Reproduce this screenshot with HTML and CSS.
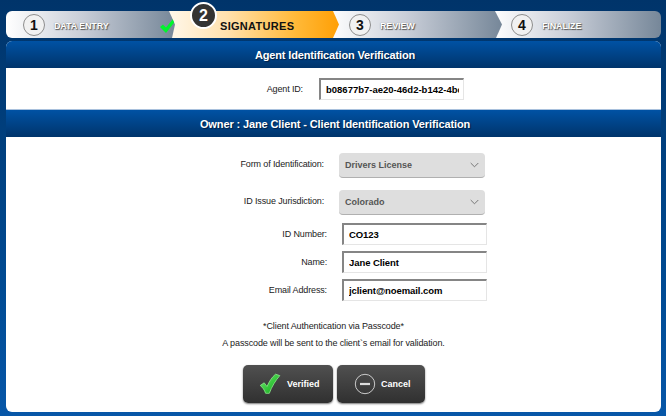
FILE: index.html
```
<!DOCTYPE html>
<html lang="en">
<head>
<meta charset="utf-8">
<title>Client Identification Verification</title>
<link rel="stylesheet" href="styles.css">
</head>
<body>
<nav class="steps">
  <div class="step step-1"><span class="num">1</span><span class="step-name">DATA ENTRY</span>
    <svg class="done" viewBox="0 0 15 14"><path d="M0 8 3 5.500 6 8.500 13 0 15 2.500 6 14Z" fill="#00f52c"/></svg>
  </div>
  <div class="step step-2 active"><span class="num">2</span><span class="step-name">SIGNATURES</span></div>
  <div class="step step-3"><span class="num">3</span><span class="step-name">REVIEW</span></div>
  <div class="step step-4"><span class="num">4</span><span class="step-name">FINALIZE</span></div>
</nav>
<main class="panel">
  <h2 class="bar"><span>Agent Identification Verification</span></h2>
  <div class="row row-agent"><span class="label">Agent ID:</span><div class="field"><span class="clip">b08677b7-ae20-46d2-b142-4bd</span></div></div>
  <h2 class="bar bar-owner"><span>Owner : Jane Client - Client Identification Verification</span></h2>
  <div class="form">
    <div class="row row-select"><span class="label">Form of Identification:</span><div class="select"><span>Drivers License</span><svg class="chev" viewBox="0 0 9 6"><path d="M.7 1 4.500 4.800 8.300 1"/></svg></div></div>
    <div class="row row-select"><span class="label">ID Issue Jurisdiction:</span><div class="select"><span>Colorado</span><svg class="chev" viewBox="0 0 9 6"><path d="M.7 1 4.500 4.800 8.300 1"/></svg></div></div>
    <div class="row row-text"><span class="label">ID Number:</span><div class="field"><span class="clip">CO123</span></div></div>
    <div class="row row-text"><span class="label">Name:</span><div class="field"><span class="clip">Jane Client</span></div></div>
    <div class="row row-text"><span class="label">Email Address:</span><div class="field"><span class="clip">jclient@noemail.com</span></div></div>
  </div>
  <p class="note note-first">*Client Authentication via Passcode*</p>
  <p class="note">A passcode will be sent to the client`s email for validation.</p>
  <div class="actions">
    <div class="btn btn-ok">
      <svg class="icon" viewBox="0 0 22 22"><defs><linearGradient id="g" x1="0" y1="0" x2="1" y2="1"><stop offset="0" stop-color="#72e672"/><stop offset=".55" stop-color="#35c63b"/><stop offset="1" stop-color="#149c20"/></linearGradient></defs><path d="M1.200 12.500 5.200 9.800 8 13.500C10.200 8.500 12.800 4.300 16.500 1.200L20.800 2.600C16.500 7.500 12.800 13.500 10.300 20.300H6.600C5.500 17 3.800 14.500 1.200 12.500Z" fill="url(#g)" stroke="#8eea8b" stroke-width=".8" stroke-linejoin="round"/></svg>
      <span>Verified</span>
    </div>
    <div class="btn btn-cancel">
      <svg class="icon" viewBox="0 0 22 22"><circle cx="11" cy="11" r="9.700" fill="none" stroke="#c9c9c9" stroke-width="1"/><path d="M6 11h10" stroke="#ddd" stroke-width="2.200"/></svg>
      <span>Cancel</span>
    </div>
  </div>
</main>
</body>
</html>
```
FILE: styles.css
```
* { box-sizing: border-box; }
html { height: 100%; }
body {
  margin: 0;
  height: 416px;
  padding: 11px 5px 0 6px;
  overflow: hidden;
  font-family: "Liberation Sans", Arial, sans-serif;
  background: linear-gradient(#00346a 0, #003a74 18%, #004b94 70%, #0757a8 100%);
}
.steps { display: flex; height: 27px; width: 655px; }
.step {
  position: relative;
  display: flex;
  flex: none;
  align-items: center;
  height: 27px;
  background: linear-gradient(90deg, #fff 0, #c9ced8 45%, #768799 100%);
}
.step-1 { width: 169px; z-index: 4; padding-left: 17px; border-radius: 6px 0 0 6px; clip-path: polygon(0 0, 163px 0, 100% 50%, 166px 100%, 0 100%); }
.step-2 { width: 172px; margin-left: -8px; z-index: 3; padding-left: 23px; }
.step-3 { width: 173px; margin-left: -10px; z-index: 2; padding-left: 20px; clip-path: polygon(0 0, 166px 0, 100% 50%, 167px 100%, 0 100%); }
.step-4 { width: 169px; margin-left: -10px; z-index: 1; padding-left: 19px; border-radius: 0 6px 6px 0; }
.step.active { background: none; }
.step.active::before {
  content: "";
  position: absolute;
  z-index: -1;
  inset: 0;
  background: linear-gradient(90deg, #fff8ed 0, #ffe1ad 35%, #ffb938 75%, #ff9f05 100%);
  clip-path: polygon(0 0, 166px 0, 100% 50%, 166px 100%, 0 100%);
}
.num {
  flex: none;
  width: 22px;
  height: 22px;
  border: 1px solid #8d8d8d;
  border-radius: 50%;
  background: #f1f1f1;
  color: #111;
  font: bold 14px/20px "Liberation Sans", Arial, sans-serif;
  text-align: center;
}
.active .num {
  width: 27px;
  height: 27px;
  margin-top: -18px;
  border: 2px solid #fff;
  background: #333;
  color: #fff;
  font-size: 16px;
  line-height: 23px;
}
.step-name {
  margin: 2px 0 0 9px;
  color: #fff;
  font-weight: bold;
  font-size: 9px;
  letter-spacing: -.15px;
  text-shadow: 1px 1px 1px #555, 0 0 1px #777;
}
.active .step-name { margin: 3px 0 0 3px; color: #111; font-size: 11px; letter-spacing: .3px; text-shadow: none; }
.done { position: absolute; left: 154px; top: 8px; width: 15px; height: 14px; }
.panel {
  width: 655px;
  height: 371px;
  margin-top: 3px;
  overflow: hidden;
  background: #fff;
  border-radius: 6px;
}
.bar {
  display: flex;
  justify-content: center;
  align-items: center;
  height: 27px;
  margin: 0;
  padding-left: 3px;
  color: #fff;
  font-size: 11px;
  line-height: 13px;
  letter-spacing: -.15px;
  background: linear-gradient(#0052a4, #00346b);
  text-shadow: 1px 1px 1px #001f44;
}
.bar-owner { height: 28px; border-top: 1px solid #a9c1dd; letter-spacing: -.12px; }
.bar span { padding-top: 1px; }
.row { display: flex; align-items: center; }
.label { color: #222; font-size: 9px; line-height: 12px; letter-spacing: -.13px; text-align: right; white-space: nowrap; }
.row-agent { height: 41px; }
.row-agent .label { width: 297px; margin-right: 16px; }
.field {
  width: 145px;
  height: 22px;
  padding: 0 4px 0 5px;
  border: 1px solid #e5e5e5;
  border-top: 2px solid #858585;
  border-left: 2px solid #858585;
  background: #fff;
}
.clip { display: block; overflow: hidden; white-space: nowrap; color: #000; font-weight: bold; font-size: 9.500px; letter-spacing: -.08px; line-height: 19px; }
.row-agent .clip { letter-spacing: 0; }
.form { padding-top: 16px; }
.row-select { height: 25px; margin-bottom: 12px; }
.row-select .label { width: 318px; margin-right: 15px; padding-bottom: 3px; }
.select {
  display: flex;
  align-items: center;
  justify-content: space-between;
  width: 146px;
  height: 25px;
  padding: 0 6px;
  border-radius: 4px;
  background: #dedede;
  border-bottom: 1px solid #b0b0b0;
  color: #555;
  font-weight: bold;
  font-size: 9px;
}
.chev { width: 9px; height: 6px; fill: none; stroke: #777; stroke-width: 1; }
.row-text { height: 22px; margin-bottom: 6px; }
.row-select + .row-text { margin-top: -4px; }
.row-text .label { width: 321px; margin-right: 15px; }
.note { margin: 0; color: #222; font-size: 9px; line-height: 12px; letter-spacing: -.12px; text-align: center; padding-top: 5px; }
.note-first { padding: 13px 0 0; }
.actions { display: flex; gap: 4px; margin: 16px 0 0 237px; }
.btn {
  display: flex;
  align-items: center;
  height: 38px;
  border-radius: 5px;
  color: #fff;
  font-weight: bold;
  font-size: 9px;
  background: linear-gradient(#505050, #303030);
  box-shadow: 0 1px 2px #777;
}
.btn-ok { width: 90px; padding-left: 16px; gap: 6px; }
.btn-cancel { width: 88px; padding-left: 17px; gap: 5px; }
.icon { width: 22px; height: 22px; }
```
